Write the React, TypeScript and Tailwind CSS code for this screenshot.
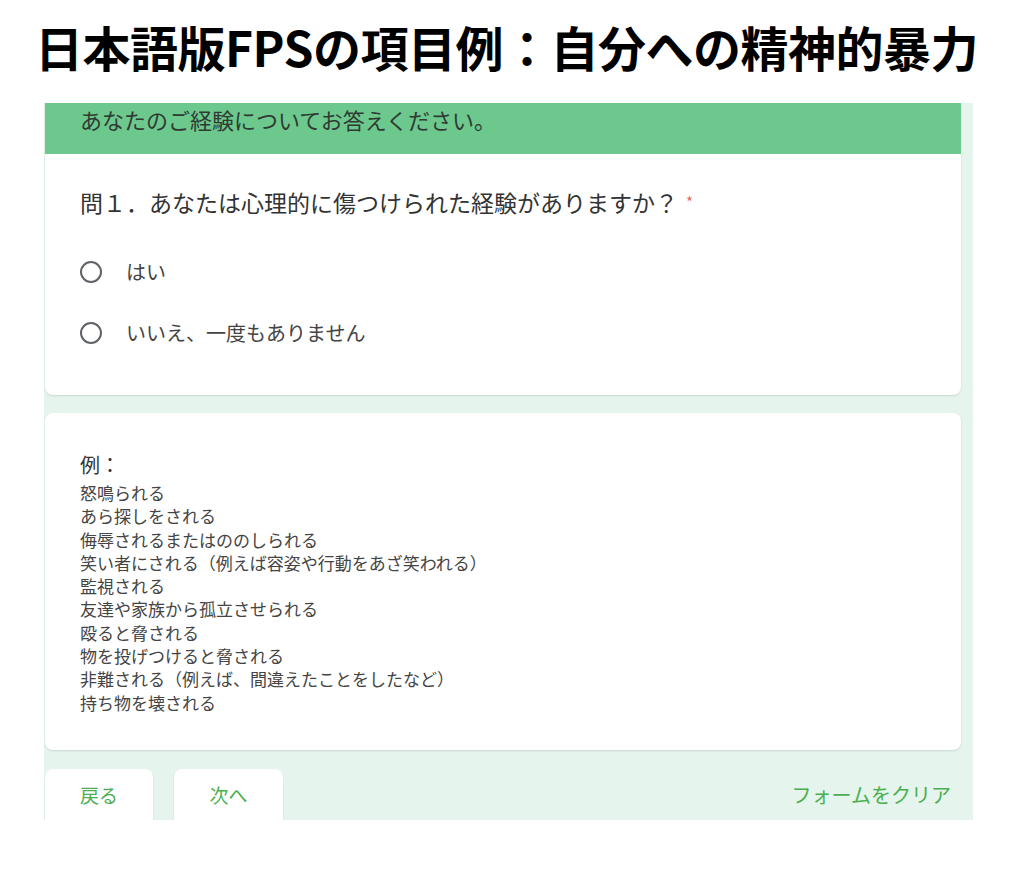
import { useState } from 'react'

const jp = "font-['Noto_Sans_CJK_JP','Noto_Sans',sans-serif]"

const EXAMPLES = [
  '怒鳴られる',
  'あら探しをされる',
  '侮辱されるまたはののしられる',
  '笑い者にされる（例えば容姿や行動をあざ笑われる）',
  '監視される',
  '友達や家族から孤立させられる',
  '殴ると脅される',
  '物を投げつけると脅される',
  '非難される（例えば、間違えたことをしたなど）',
  '持ち物を壊される',
]

const OPTIONS = ['はい', 'いいえ、一度もありません']

// ── Radio option ──────────────────────────────────────────────────────────────

function RadioOption({ label, checked, onSelect }: { label: string; checked: boolean; onSelect: () => void }) {
  return (
    <button type="button" onClick={onSelect} className="flex items-center h-[40px] text-left">
      <span className="w-[22px] h-[22px] rounded-full border-[2.5px] border-[#5f6368] shrink-0 flex items-center justify-center">
        {checked && <span className="w-[9px] h-[9px] rounded-full bg-[#5f6368]" />}
      </span>
      <span className="ml-[24px] text-[20px] leading-[28px] text-[#444]">{label}</span>
    </button>
  )
}

// ── Page ──────────────────────────────────────────────────────────────────────

export default function App() {
  const [answer, setAnswer] = useState<number | null>(null)

  return (
    <div className={`w-[1024px] h-[878px] bg-white ${jp}`}>
      <h1 className="pt-[20px] pl-[35px] h-[103px] text-[48px] leading-[52px] font-bold text-black tracking-[-0.5px] whitespace-nowrap">
        日本語版FPSの項目例：自分への精神的暴力
      </h1>

      <div className="ml-[44px] w-[929px] h-[717px] bg-[#e5f4ec] overflow-hidden flex flex-col">
        {/* header + question */}
        <div className="shrink-0 ml-[1px] w-[916px] bg-white rounded-b-lg shadow-[0_1px_2px_rgba(0,0,0,0.12)]">
          <div className="h-[51px] bg-[#6dc88d] pl-[35px] pt-[2px] text-[22px] leading-[28px] text-[#2f3a33]">
            あなたのご経験についてお答えください。
          </div>
          <div className="h-[241px] pl-[35px] pt-[33px]">
            <p className="text-[23px] leading-[30px] text-[#333] whitespace-nowrap">
              問１．あなたは心理的に傷つけられた経験がありますか？
              <span className="ml-[8px] text-[15px] align-top text-[#e06b62]">*</span>
            </p>
            <div className="mt-[35px] flex flex-col gap-[21px]">
              {OPTIONS.map((o, i) => (
                <RadioOption key={o} label={o} checked={answer === i} onSelect={() => setAnswer(i)} />
              ))}
            </div>
          </div>
        </div>

        {/* examples */}
        <div className="shrink-0 mt-[18px] ml-[1px] w-[916px] h-[337px] bg-white rounded-lg shadow-[0_1px_2px_rgba(0,0,0,0.12)] pl-[35px] pt-[38px]">
          <p className="text-[20px] leading-[28px] text-[#333]">例：</p>
          <ul className="mt-[2px] text-[17px] leading-[23.3px] text-[#444]">
            {EXAMPLES.map((e) => (
              <li key={e}>{e}</li>
            ))}
          </ul>
        </div>

        {/* nav */}
        <div className="shrink-0 mt-[19px] ml-[1px] flex items-start">
          <button type="button" className="w-[108px] h-[60px] bg-white rounded-lg shadow-[0_1px_2px_rgba(0,0,0,0.12)] pb-[8px] text-[19px] leading-[24px] text-[#4caf50]">
            戻る
          </button>
          <button type="button" className="ml-[21px] w-[109px] h-[60px] bg-white rounded-lg shadow-[0_1px_2px_rgba(0,0,0,0.12)] pb-[8px] text-[19px] leading-[24px] text-[#4caf50]">
            次へ
          </button>
          <button type="button" className="ml-auto mr-[22px] pt-[14px] text-[20px] leading-[24px] text-[#4caf50]">
            フォームをクリア
          </button>
        </div>
      </div>
    </div>
  )
}
